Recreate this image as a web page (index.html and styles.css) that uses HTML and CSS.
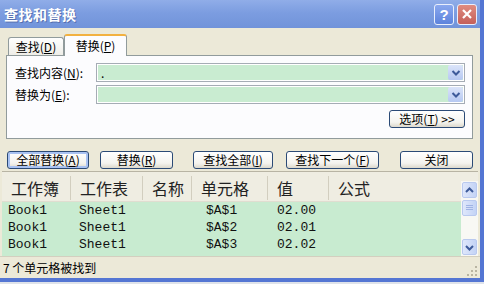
FILE: index.html
```html
<!DOCTYPE html>
<html lang="zh-CN">
<head>
<meta charset="UTF-8">
<title>查找和替换</title>
<link rel="stylesheet" href="styles.css">
</head>
<body>

<div class="window">
    <div class="titlebar">
        <span class="title">查找和替换</span>
        <span class="cap help">?</span>
        <span class="cap close">
            <svg width="12" height="12" viewBox="0 0 12 12"><path d="M2 2 L10 10 M10 2 L2 10" stroke="#fff" stroke-width="2.2"/></svg>
        </span>
    </div>

    <div class="tabs">
        <div class="tab">查找(<u>D</u>)</div>
        <div class="tab active">替换(<u>P</u>)</div>
    </div>

    <div class="panel">
        <div class="field">
            <label>查找内容(<u>N</u>):</label>
            <div class="combo"><span class="combo-text">.</span><span class="drop"><svg width="10" height="8" viewBox="0 0 10 8"><path d="M1.5 2 L5 5.5 L8.5 2" stroke="#3d5a9a" stroke-width="2" fill="none"/></svg></span></div>
        </div>
        <div class="field">
            <label>替换为(<u>E</u>):</label>
            <div class="combo"><span class="combo-text"></span><span class="drop"><svg width="10" height="8" viewBox="0 0 10 8"><path d="M1.5 2 L5 5.5 L8.5 2" stroke="#3d5a9a" stroke-width="2" fill="none"/></svg></span></div>
        </div>
        <div class="options-row">
            <button class="btn btn-options">选项(<u>T</u>) &gt;&gt;</button>
        </div>
    </div>

    <div class="actions">
        <button class="btn default btn-all">全部替换(<u>A</u>)</button>
        <button class="btn btn-replace">替换(<u>R</u>)</button>
        <button class="btn btn-findall">查找全部(<u>I</u>)</button>
        <button class="btn btn-next">查找下一个(<u>F</u>)</button>
        <button class="btn btn-close">关闭</button>
    </div>

    <div class="results">
        <div class="list">
            <div class="list-head">
                <div class="hcell">工作簿</div>
                <div class="hcell">工作表</div>
                <div class="hcell">名称</div>
                <div class="hcell">单元格</div>
                <div class="hcell">值</div>
                <div class="hcell last">公式</div>
            </div>
            <div class="list-body">
                <div class="row"><span>Book1</span><span>Sheet1</span><span></span><span>$A$1</span><span>02.00</span></div>
                <div class="row"><span>Book1</span><span>Sheet1</span><span></span><span>$A$2</span><span>02.01</span></div>
                <div class="row"><span>Book1</span><span>Sheet1</span><span></span><span>$A$3</span><span>02.02</span></div>
            </div>
        </div>
        <div class="scrollbar">
            <span class="sb-btn"><svg width="9" height="7" viewBox="0 0 9 7"><path d="M1 5 L4.5 1.5 L8 5" stroke="#3d5a9a" stroke-width="2" fill="none"/></svg></span>
            <span class="sb-thumb"><svg width="7" height="6" viewBox="0 0 7 6"><path d="M0 0.5 H7 M0 2.5 H7 M0 4.5 H7" stroke="#9fb3e4" stroke-width="1"/></svg></span>
            <span class="sb-track"></span>
            <span class="sb-btn"><svg width="9" height="7" viewBox="0 0 9 7"><path d="M1 2 L4.5 5.5 L8 2" stroke="#3d5a9a" stroke-width="2" fill="none"/></svg></span>
        </div>
    </div>

    <div class="status">
        <span>7 个单元格被找到</span>
        <svg class="grip" width="11" height="11" viewBox="0 0 11 11">
            <g fill="#b8b4a2">
                <rect x="8" y="0" width="2" height="2"/>
                <rect x="4" y="4" width="2" height="2"/><rect x="8" y="4" width="2" height="2"/>
                <rect x="0" y="8" width="2" height="2"/><rect x="4" y="8" width="2" height="2"/><rect x="8" y="8" width="2" height="2"/>
            </g>
        </svg>
    </div>
</div>

</body>
</html>
```

FILE: styles.css
```css
body {
  margin: 0;
  width: 484px;
  height: 284px;
  overflow: hidden;
  background: #dfe3ea;
  font-family: "Noto Sans CJK SC", "Liberation Sans", sans-serif;
  font-size: 12px;
  color: #000;
}

u {
  text-decoration: underline;
  text-underline-offset: 1px;
}

.window {
  width: 480px;
  height: 278px;
  border-right: 4px solid #5476d3;
  border-bottom: 4px solid #5476d3;
  background: #ece9d8;
  display: flex;
  flex-direction: column;
}

/* title bar */
.titlebar {
  height: 28px;
  flex: none;
  display: flex;
  align-items: center;
  padding: 0 3px 0 4px;
  background: linear-gradient(#90ade8, #7c9de0 45%, #7193da);
}

.title {
  flex: 1;
  color: #fff;
  font-weight: bold;
  font-size: 14px;
  letter-spacing: 0.5px;
  text-shadow: 1px 1px 0 #5670b0;
}

.cap {
  width: 18px;
  height: 19px;
  border: 1px solid #e8eefc;
  border-radius: 3px;
  display: flex;
  align-items: center;
  justify-content: center;
  margin-left: 3px;
}

.help {
  background: linear-gradient(#8aa8ee, #5d83dc);
  color: #fff;
  font-family: "Liberation Sans", sans-serif;
  font-weight: bold;
  font-size: 15px;
}

.close {
  background: linear-gradient(#e08c80, #c4605a);
}

/* tabs */
.tabs {
  height: 21px;
  flex: none;
  margin-top: 6px;
  padding-left: 8px;
  display: flex;
  align-items: flex-end;
}

.tab {
  width: 54px;
  height: 17px;
  border: 1px solid #919b9c;
  border-bottom: none;
  border-radius: 3px 3px 0 0;
  background: linear-gradient(#fefefe, #efeee8);
  display: flex;
  align-items: center;
  justify-content: center;
  line-height: 1;
}

.tab.active {
  width: 61px;
  height: 19px;
  border-top: 2px solid #f2b140;
  background: #fcfcfe;
  position: relative;
  z-index: 1;
  margin-bottom: -1px;
  padding-bottom: 1px;
}

.panel {
  width: 450px;
  height: 75px;
  flex: none;
  margin-left: 6px;
  padding: 7px 7px 0 8px;
  border: 1px solid #919b9c;
  background: #fcfcfe;
}

.field {
  display: flex;
  align-items: center;
  height: 19px;
  margin-bottom: 3px;
}

.field label {
  width: 81px;
  flex: none;
}

.combo {
  flex: 1;
  height: 17px;
  border: 1px solid #a5acb5;
  display: flex;
  align-items: center;
  background: #c9ecd1;
  box-shadow: inset 0 0 0 1px #fff;
}

.combo-text {
  flex: 1;
  padding-left: 4px;
  line-height: 1;
}

.drop {
  width: 15px;
  height: 15px;
  margin-right: 1px;
  border-radius: 2px;
  background: linear-gradient(#dbe4f9, #b6c8f2);
  display: flex;
  align-items: center;
  justify-content: center;
}

.options-row {
  display: flex;
  justify-content: flex-end;
  margin-top: 6px;
}

/* buttons */
.btn {
  height: 18px;
  padding: 0;
  border: 1px solid #2b4a76;
  border-radius: 3px;
  background: linear-gradient(#ffffff, #f4f3ee 70%, #dcd8cc);
  font-family: inherit;
  font-size: 12px;
  line-height: 1;
  color: #000;
}

.btn.default {
  box-shadow: inset 0 0 0 2px #a9c2f2;
}

.btn-options { width: 76px; }

.actions {
  height: 18px;
  flex: none;
  margin-top: 12px;
  display: flex;
}

.btn-all { width: 82px; margin-left: 7px; }
.btn-replace { width: 73px; margin-left: 11px; }
.btn-findall { width: 80px; margin-left: 20px; }
.btn-next { width: 93px; margin-left: 13px; }
.btn-close { width: 73px; margin-left: 21px; }

/* results list */
.results {
  height: 84px;
  flex: none;
  margin: 2px 2px 0 2px;
  border-top: 1px solid #b8b4a4;
  display: flex;
  background: #c8ebd0;
}

.list {
  flex: 1;
  display: flex;
  flex-direction: column;
  overflow: hidden;
}

.list-head {
  height: 29px;
  flex: none;
  display: grid;
  grid-template-columns: 69px 72px 49px 76px 61px 1fr;
  background: #efede2;
  border-bottom: 1px solid #e0ddd0;
}

.hcell {
  display: flex;
  align-items: center;
  padding-left: 9px;
  margin: 4px 0 2px 0;
  border-right: 1px solid #d2cebf;
  font-size: 16px;
  color: #222;
}

.hcell.last {
  border-right: none;
}

.list-body {
  flex: 1;
  overflow: hidden;
}

.row {
  height: 17px;
  display: grid;
  grid-template-columns: 71px 72px 55px 71px 1fr;
  padding-left: 6px;
  align-items: center;
  font-family: "Liberation Mono", monospace;
  font-size: 13px;
  color: #111;
}

.scrollbar {
  width: 17px;
  flex: none;
  display: flex;
  flex-direction: column;
  align-items: center;
  padding-top: 10px;
  background: linear-gradient(#efede2 9px, #f8f8f4 9px);
}

.sb-btn,
.sb-thumb {
  width: 13px;
  height: 14px;
  border: 1px solid #b9c9ef;
  border-radius: 2px;
  background: linear-gradient(90deg, #dfe7fb, #c3d3f6);
  display: flex;
  align-items: center;
  justify-content: center;
}

.sb-thumb {
  height: 14px;
  margin-top: 2px;
}

.sb-track {
  flex: 1;
}

.sb-btn:last-child {
  margin-bottom: 1px;
}

/* status bar */
.status {
  height: 22px;
  flex: none;
  display: flex;
  align-items: center;
  justify-content: space-between;
  padding-left: 3px;
  border-top: 1px solid #d3cfbf;
  box-sizing: border-box;
}

.grip {
  margin: 8px 2px 0 0;
}
```
